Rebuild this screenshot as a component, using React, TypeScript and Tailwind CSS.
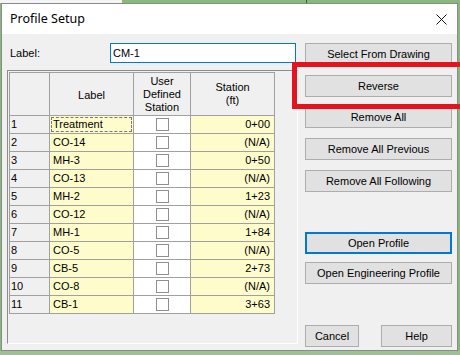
import React from "react";

const rows: [string, string, string][] = [
  ["1", "Treatment", "0+00"],
  ["2", "CO-14", "(N/A)"],
  ["3", "MH-3", "0+50"],
  ["4", "CO-13", "(N/A)"],
  ["5", "MH-2", "1+23"],
  ["6", "CO-12", "(N/A)"],
  ["7", "MH-1", "1+84"],
  ["8", "CO-5", "(N/A)"],
  ["9", "CB-5", "2+73"],
  ["10", "CO-8", "(N/A)"],
  ["11", "CB-1", "3+63"],
];

function Btn({
  children,
  className = "",
  focused = false,
}: {
  children: React.ReactNode;
  className?: string;
  focused?: boolean;
}) {
  return (
    <div
      className={
        "flex items-center justify-center h-[22px] bg-[#e1e1e1] text-[11px] text-black " +
        (focused ? "border-2 border-[#0078d7] " : "border border-[#adadad] ") +
        className
      }
    >
      {children}
    </div>
  );
}

export default function App() {
  return (
    <div
      className="relative w-[460px] h-[355px] overflow-hidden bg-[#88b97c]"
      style={{ fontFamily: '"Liberation Sans", Arial, sans-serif' }}
    >
      {/* desktop fragments behind the dialog */}
      <div className="absolute left-0 top-0 w-[122px] h-[3px] bg-[#f4f4f4]" />
      <div className="absolute left-[306px] top-0 w-[1px] h-[3px] bg-[#1f6b1f]" />
      <div className="absolute left-0 top-[351px] w-[460px] h-[4px] bg-[#9fbf96]" />

      {/* dialog window */}
      <div className="absolute left-[1px] top-[3px] w-[457px] h-[348px] border border-[#8a8a8a] flex flex-col bg-[#f0f0f0]">
        {/* title bar */}
        <div className="h-[30px] bg-white flex items-center justify-between pl-[8px] pr-[9px] shrink-0">
          <span className="text-[12.5px] text-black" style={{ fontFamily: '"Noto Sans", "Open Sans", sans-serif' }}>
            Profile Setup
          </span>
          <svg width="11" height="11" viewBox="0 0 11 11" className="mr-[1px]">
            <path d="M0.5 0.5 L10.5 10.5 M10.5 0.5 L0.5 10.5" stroke="#111" strokeWidth="1" fill="none" />
          </svg>
        </div>

        {/* body */}
        <div className="flex flex-row pt-[9px] flex-1">
          {/* left column */}
          <div className="flex flex-col w-[296px]">
            <div className="flex items-center h-[20px] pl-[8px]">
              <span className="w-[100px] text-[11px] text-black">Label:</span>
              <div className="w-[186px] h-[20px] border border-[#0078d7] bg-white flex items-center px-[2px] text-[11px] text-black">
                CM-1
              </div>
            </div>

            <div className="mt-[7px] ml-[5px] w-[291px] h-[274px] border-l border-t border-[#8c8c8c] border-r border-b border-r-white border-b-white pl-[1px] pt-[1px]">
              <div className="grid grid-cols-[40px_84px_57px_84px] w-[266px] border-l border-t border-[#a0a0a0] text-[11px] text-black">
                {/* header */}
                <div className="h-[43px] bg-[#f0f0f0] border-r border-b border-[#a0a0a0]" />
                <div className="h-[43px] bg-[#f0f0f0] border-r border-b border-[#a0a0a0] flex items-center justify-center pt-[3px]">
                  Label
                </div>
                <div className="h-[43px] bg-[#f0f0f0] border-r border-b border-[#a0a0a0] flex items-center justify-center text-center leading-[13px]">
                  User
                  <br />
                  Defined
                  <br />
                  Station
                </div>
                <div className="h-[43px] bg-[#f0f0f0] border-r border-b border-[#a0a0a0] flex items-center justify-center text-center leading-[13px]">
                  Station
                  <br />
                  (ft)
                </div>

                {rows.map(([n, label, st]) => (
                  <React.Fragment key={n}>
                    <div className="h-[18px] bg-[#f0f0f0] border-r border-b border-[#a0a0a0] flex items-center pl-[1px]">
                      {n}
                    </div>
                    <div className="h-[18px] bg-[#fffccc] border-r border-b border-[#a0a0a0] flex items-center relative pl-[3px]">
                      {n === "1" && (
                        <div className="absolute left-[1px] top-[1px] right-[1px] bottom-[1px] border border-dashed border-[#777]" />
                      )}
                      <span className="relative">{label}</span>
                    </div>
                    <div className="h-[18px] bg-white border-r border-b border-[#a0a0a0] flex items-center justify-center">
                      <div className="w-[13px] h-[13px] border border-[#8f8f8f] bg-white" />
                    </div>
                    <div className="h-[18px] bg-[#fffccc] border-r border-b border-[#a0a0a0] flex items-center justify-end pr-[4px]">
                      {st}
                    </div>
                  </React.Fragment>
                ))}
              </div>
            </div>
          </div>

          {/* right column */}
          <div className="flex flex-col ml-[7px] w-[147px]">
            <Btn>Select From Drawing</Btn>
            <Btn className="mt-[10px]">Reverse</Btn>
            <Btn className="mt-[9px]">Remove All</Btn>
            <Btn className="mt-[10px]">Remove All Previous</Btn>
            <Btn className="mt-[10px]">Remove All Following</Btn>
            <Btn className="mt-[40px]" focused>
              Open Profile
            </Btn>
            <Btn className="mt-[8px]">Open Engineering Profile</Btn>
            <div className="flex flex-row justify-between mt-[41px]">
              <Btn className="w-[54px]">Cancel</Btn>
              <Btn className="w-[71px]">Help</Btn>
            </div>
          </div>
        </div>
      </div>

      {/* red annotation box */}
      <div className="absolute left-[292px] top-[62px] w-[180px] h-[47px] border-[5px] border-[#e3141e]" />
    </div>
  );
}
